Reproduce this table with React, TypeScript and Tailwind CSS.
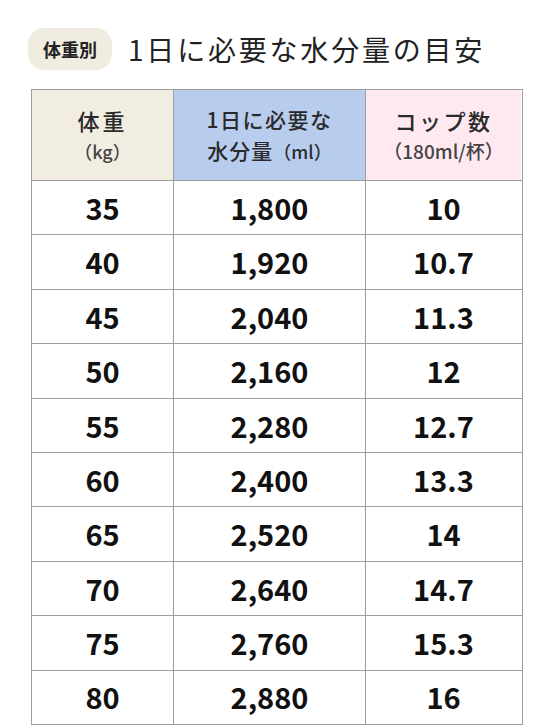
import React from "react";

const rows: [string, string, string][] = [
  ["35", "1,800", "10"],
  ["40", "1,920", "10.7"],
  ["45", "2,040", "11.3"],
  ["50", "2,160", "12"],
  ["55", "2,280", "12.7"],
  ["60", "2,400", "13.3"],
  ["65", "2,520", "14"],
  ["70", "2,640", "14.7"],
  ["75", "2,760", "15.3"],
  ["80", "2,880", "16"],
];

export default function App() {
  return (
    <div
      className="w-[559px] h-[727px] overflow-hidden bg-white text-[#1c1c1c]"
      style={{ fontFamily: '"Noto Sans CJK JP", "Noto Sans", sans-serif' }}
    >
      <div className="flex items-center pt-[28px] pl-[28px] h-[70px]">
        <div className="h-[42px] w-[84px] rounded-[16px] bg-[#f1ece0] flex items-center justify-center text-[18px] font-bold text-[#222]">
          体重別
        </div>
        <div className="ml-[16px] text-[28px] leading-none tracking-[2.8px] text-[#222]">
          1日に必要な水分量の目安
        </div>
      </div>
      <div className="ml-[31px] mt-[19px] w-[492px] border-[1.5px] border-[#9e9e9e]">
        <div className="grid grid-cols-[142px_192px_155px] h-[90px] text-[#2a2a2a] font-medium">
          <div className="bg-[#f2ede1] border-r-[1.5px] border-[#9e9e9e] flex flex-col items-center justify-center">
            <div className="text-[22px] leading-[32px] tracking-[3px]">体重</div>
            <div className="text-[18px] leading-[30px] text-[#444]">（kg）</div>
          </div>
          <div className="bg-[#b8cdee] border-r-[1.5px] border-[#9e9e9e] flex flex-col items-center justify-center">
            <div className="text-[21px] leading-[31px] tracking-[1.5px]">1日に必要な</div>
            <div className="text-[21px] leading-[31px] tracking-[1px]">
              水分量<span className="text-[18px] tracking-normal">（ml）</span>
            </div>
          </div>
          <div className="bg-[#fde9ef] flex flex-col items-center justify-center">
            <div className="text-[22px] leading-[32px] tracking-[2.5px]">コップ数</div>
            <div className="text-[19px] leading-[30px] text-[#444]">（180ml/杯）</div>
          </div>
        </div>
        {rows.map((r) => (
          <div
            key={r[0]}
            className="grid grid-cols-[142px_192px_155px] h-[54.4px] border-t-[1.5px] border-[#9e9e9e] text-[29px] font-bold text-[#111]"
          >
            <div className="flex items-center justify-center border-r-[1.5px] border-[#9e9e9e]">{r[0]}</div>
            <div className="flex items-center justify-center border-r-[1.5px] border-[#9e9e9e]">{r[1]}</div>
            <div className="flex items-center justify-center">{r[2]}</div>
          </div>
        ))}
      </div>
    </div>
  );
}
